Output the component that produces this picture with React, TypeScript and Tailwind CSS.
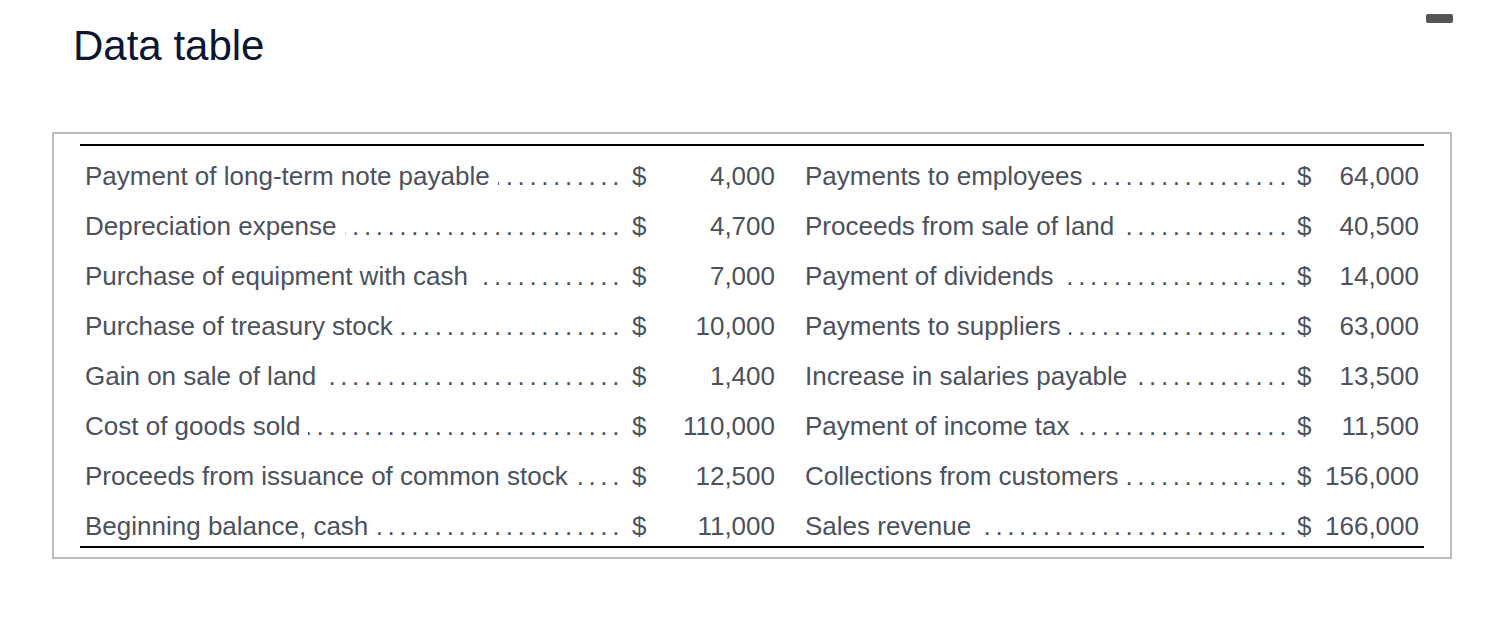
import React from 'react';

type Row = { label: string; value: string };

const left: Row[] = [
  { label: 'Payment of long-term note payable', value: '4,000' },
  { label: 'Depreciation expense', value: '4,700' },
  { label: 'Purchase of equipment with cash', value: '7,000' },
  { label: 'Purchase of treasury stock', value: '10,000' },
  { label: 'Gain on sale of land', value: '1,400' },
  { label: 'Cost of goods sold', value: '110,000' },
  { label: 'Proceeds from issuance of common stock', value: '12,500' },
  { label: 'Beginning balance, cash', value: '11,000' },
];

const right: Row[] = [
  { label: 'Payments to employees', value: '64,000' },
  { label: 'Proceeds from sale of land', value: '40,500' },
  { label: 'Payment of dividends', value: '14,000' },
  { label: 'Payments to suppliers', value: '63,000' },
  { label: 'Increase in salaries payable', value: '13,500' },
  { label: 'Payment of income tax', value: '11,500' },
  { label: 'Collections from customers', value: '156,000' },
  { label: 'Sales revenue', value: '166,000' },
];

const DOTS = '.'.repeat(80);

function Leader({ label, className }: { label: string; className: string }) {
  return (
    <div className={`flex items-baseline min-w-0 ${className}`}>
      <span className="whitespace-nowrap">{label}</span>
      {/* margin, not padding, so clipped dots never touch the label */}
      <span className="flex-1 min-w-0 ml-[8px] overflow-hidden whitespace-nowrap text-right tracking-[4.6px] [direction:rtl]">
        {DOTS}
      </span>
    </div>
  );
}

export default function App() {
  return (
    <div className="relative w-[1486px] h-[626px] bg-white font-['Liberation_Sans',Arial,sans-serif]">
      {/* minimize handle */}
      <div className="absolute left-[1426px] top-[14px] w-[27px] h-[9px] rounded-[2px] bg-[#555555]" />

      <h1 className="pl-[73px] pt-[25px] text-[42px] leading-[42px] text-[#0b1630]">Data table</h1>

      <div className="ml-[52px] mt-[65px] w-[1400px] border-2 border-[#bdbdbd] px-[26px] pt-[10px] pb-[9px]">
        <div className="border-t-2 border-b-2 border-black text-[26px] text-[#4b515d]">
          {left.map((l, i) => {
            const r = right[i];
            return (
              <div
                key={l.label}
                className="grid grid-cols-[548px_20px_132px_514px_18px_112px] h-[50px] pt-[10px] items-center leading-[30px]"
              >
                <Leader label={l.label} className="pl-[5px] pr-[4px]" />
                <span className="pl-[4px]">$</span>
                <span className="text-right pr-[5px]">{l.value}</span>
                <Leader label={r.label} className="pl-[25px] pr-[3px]" />
                <span className="pl-[3px]">$</span>
                <span className="text-right pr-[5px]">{r.value}</span>
              </div>
            );
          })}
        </div>
      </div>
    </div>
  );
}
